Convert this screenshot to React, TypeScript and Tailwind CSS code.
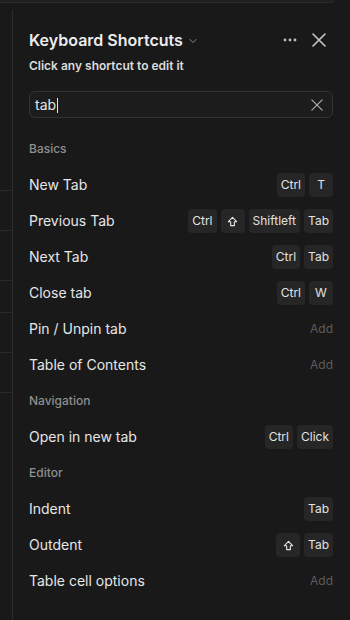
import { ChevronDown } from 'lucide-react';

type Row =
  | { kind: 'section'; label: string }
  | { kind: 'item'; label: string; keys?: string[] };

const rows: Row[] = [
  { kind: 'section', label: 'Basics' },
  { kind: 'item', label: 'New Tab', keys: ['Ctrl', 'T'] },
  { kind: 'item', label: 'Previous Tab', keys: ['Ctrl', '⇧', 'Shiftleft', 'Tab'] },
  { kind: 'item', label: 'Next Tab', keys: ['Ctrl', 'Tab'] },
  { kind: 'item', label: 'Close tab', keys: ['Ctrl', 'W'] },
  { kind: 'item', label: 'Pin / Unpin tab' },
  { kind: 'item', label: 'Table of Contents' },
  { kind: 'section', label: 'Navigation' },
  { kind: 'item', label: 'Open in new tab', keys: ['Ctrl', 'Click'] },
  { kind: 'section', label: 'Editor' },
  { kind: 'item', label: 'Indent', keys: ['Tab'] },
  { kind: 'item', label: 'Outdent', keys: ['⇧', 'Tab'] },
  { kind: 'item', label: 'Table cell options' },
];

function ShiftIcon() {
  return (
    <svg width="11" height="11" viewBox="0 0 12 12" fill="none">
      <path
        d="M6 1.5 L10.5 6.2 H8 V10.5 H4 V6.2 H1.5 Z"
        stroke="#e5e5e5"
        strokeWidth="1.2"
        strokeLinejoin="round"
      />
    </svg>
  );
}

function Cross({ size, stroke, width }: { size: number; stroke: string; width: number }) {
  return (
    <svg width={size} height={size} viewBox="0 0 14 14" fill="none">
      <path d="M1 1 L13 13 M13 1 L1 13" stroke={stroke} strokeWidth={width} strokeLinecap="round" />
    </svg>
  );
}

function Kbd({ k }: { k: string }) {
  return (
    <span className="flex h-6 min-w-6 items-center justify-center rounded bg-[#262626] px-1 text-xs text-[#e2e2e2]">
      {k === '⇧' ? <ShiftIcon /> : k}
    </span>
  );
}

export default function App() {
  return (
    <div
      className="flex h-[620px] w-[350px] flex-col overflow-hidden bg-[#191919]"
      style={{ fontFamily: 'Inter, "Noto Sans", sans-serif' }}
    >
      <div className="h-[3px] w-[334px] shrink-0 rounded-br-lg border-b border-r border-[#2a2a2a] bg-[#202020]" />

      <div className="flex flex-1 pt-[7px]">
        <div className="flex w-[13px] shrink-0 flex-col border-r border-[#2c2c2c]">
          <div className="h-[180px]" />
          <div className="h-[40px] border-t border-[#2a2a2a]" />
          <div className="h-[50px] border-t border-[#2a2a2a]" />
          <div className="h-[32px] border-t border-[#2a2a2a]" />
          <div className="h-[40px] border-t border-[#2a2a2a]" />
          <div className="h-[40px] border-t border-[#2a2a2a]" />
          <div className="border-t border-[#2a2a2a]" />
        </div>

        <div className="flex-1 pl-4 pr-[17px] pt-[18px]">
          <div className="flex items-center justify-between">
            <div className="flex items-center gap-1">
              <span className="text-base font-semibold text-[#ececec]">Keyboard Shortcuts</span>
              <ChevronDown size={12} className="mt-0.5 text-[#8a8a8a]" />
            </div>
            <div className="flex items-center gap-[15px] pr-[7px]">
              <svg width="14" height="4" viewBox="0 0 14 4" fill="#bdbdbd">
                <circle cx="2" cy="2" r="1.4" />
                <circle cx="7" cy="2" r="1.4" />
                <circle cx="12" cy="2" r="1.4" />
              </svg>
              <Cross size={14} stroke="#c8c8c8" width={1.6} />
            </div>
          </div>
          <div className="mt-[6px] text-xs font-semibold text-[#dcdcdc]">Click any shortcut to edit it</div>

          <div className="mt-[17px] flex h-[27px] items-center justify-between rounded-md border border-[#333] bg-[#1c1c1c] pl-[5px] pr-[9px]">
            <span className="text-sm text-[#e5e5e5]">
              tab<span className="ml-px inline-block h-[15px] w-px translate-y-[3px] bg-[#e5e5e5]" />
            </span>
            <Cross size={12} stroke="#b0b0b0" width={1.3} />
          </div>

          <div className="mt-[13px] flex flex-col">
            {rows.map((r, i) =>
              r.kind === 'section' ? (
                <div key={i} className="flex h-9 items-center text-xs font-medium text-[#8f8f8f]">
                  {r.label}
                </div>
              ) : (
                <div key={i} className="flex h-9 items-center justify-between">
                  <span className="text-sm text-[#e6e6e6]">{r.label}</span>
                  {r.keys ? (
                    <div className="flex items-center gap-1">
                      {r.keys.map((k, j) => (
                        <Kbd key={j} k={k} />
                      ))}
                    </div>
                  ) : (
                    <span className="text-xs text-[#5c5c5c]">Add</span>
                  )}
                </div>
              )
            )}
          </div>
        </div>
      </div>
    </div>
  );
}
